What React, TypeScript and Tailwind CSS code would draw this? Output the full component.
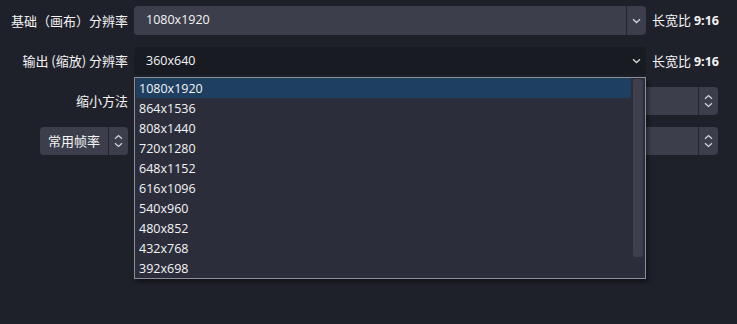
const items = [
  "1080x1920",
  "864x1536",
  "808x1440",
  "720x1280",
  "648x1152",
  "616x1096",
  "540x960",
  "480x852",
  "432x768",
  "392x698",
];

const ChevronDown = () => (
  <svg width="9" height="6" viewBox="0 0 9 6" fill="none">
    <path d="M1 1.2 L4.5 4.5 L8 1.2" stroke="#d4d6dc" strokeWidth="1.3" />
  </svg>
);

const UpDown = () => (
  <svg width="9" height="14" viewBox="0 0 9 14" fill="none">
    <path d="M1 4.8 L4.5 1.5 L8 4.8" stroke="#d4d6dc" strokeWidth="1.2" />
    <path d="M1 9.2 L4.5 12.5 L8 9.2" stroke="#d4d6dc" strokeWidth="1.2" />
  </svg>
);

const Label = ({ children }: { children: React.ReactNode }) => (
  <div className="w-[128px] shrink-0 text-right text-[13px] font-['Noto_Sans_CJK_SC',sans-serif]">
    {children}
  </div>
);

const Ratio = () => (
  <div className="ml-[6px] text-[13px] font-['Noto_Sans_CJK_SC',sans-serif]">
    长宽比 <span className="font-bold font-['Open_Sans',sans-serif] text-[12.5px]">9:16</span>
  </div>
);

const Spin = () => (
  <div className="ml-[6px] flex h-full w-[584px] rounded-[4px] bg-[#3c3f4b]">
    <div className="flex-1" />
    <div className="flex w-[20px] items-center justify-center border-l border-[#23252e]">
      <UpDown />
    </div>
  </div>
);

export default function App() {
  return (
    <div className="relative h-[324px] w-[737px] overflow-hidden bg-[#1f212a] text-[#f4f4f6]">
      <div className="flex flex-col gap-[12px] pt-[6px]">
        <div className="flex h-[29px] items-center">
          <Label>基础（画布）分辨率</Label>
          <div className="ml-[6px] flex h-full w-[512px] rounded-[4px] bg-[#3c3f4b]">
            <div className="flex flex-1 items-center pl-[12px] text-[12.5px] font-['Open_Sans',sans-serif]">
              1080x1920
            </div>
            <div className="flex w-[20px] items-center justify-center border-l border-[#23252e]">
              <ChevronDown />
            </div>
          </div>
          <Ratio />
        </div>

        <div className="flex h-[28px] items-center">
          <Label>输出 (缩放) 分辨率</Label>
          <div className="ml-[6px] flex h-full w-[512px] rounded-[4px] bg-[#191b23]">
            <div className="flex flex-1 items-center pl-[12px] text-[12.5px] font-['Open_Sans',sans-serif]">
              360x640
            </div>
            <div className="flex w-[20px] items-center justify-center">
              <ChevronDown />
            </div>
          </div>
          <Ratio />
        </div>

        <div className="flex h-[28px] items-center">
          <Label>缩小方法</Label>
          <Spin />
        </div>

        <div className="flex h-[28px] items-center">
          <div className="flex w-[128px] shrink-0 justify-end">
            <div className="flex h-[28px] w-[88px] rounded-[4px] bg-[#3c3f4b]">
              <div className="flex flex-1 items-center justify-center text-[13px] font-['Noto_Sans_CJK_SC',sans-serif]">
                常用帧率
              </div>
              <div className="flex w-[20px] items-center justify-center border-l border-[#23252e]">
                <UpDown />
              </div>
            </div>
          </div>
          <Spin />
        </div>
      </div>

      <div className="absolute left-[134px] top-[77px] flex w-[512px] border border-[#8c8f99] bg-[#2b2e3a] shadow-[2px_3px_4px_rgba(0,0,0,0.45)]">
        <div className="flex flex-1 flex-col pl-[1px]">
          {items.map((it, i) => (
            <div
              key={it}
              className={
                i === 0
                  ? "flex h-[20px] items-center rounded-[2px] bg-[#1f3f60] pl-[3px] pt-[2px] text-[12.5px] font-['Open_Sans',sans-serif]"
                  : "flex h-[20px] items-center pl-[3px] pt-[2px] text-[12.5px] font-['Open_Sans',sans-serif]"
              }
            >
              {it}
            </div>
          ))}
        </div>
        <div className="flex w-[14px] justify-center pt-[1px]">
          <div className="h-[178px] w-[10px] rounded-[3px] bg-[#3d404c]" />
        </div>
      </div>
    </div>
  );
}
